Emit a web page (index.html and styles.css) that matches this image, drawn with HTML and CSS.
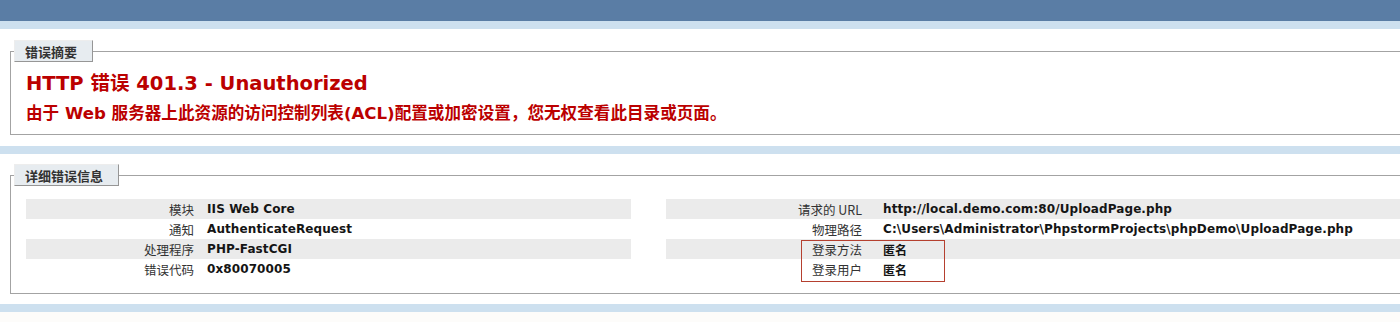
FILE: index.html
```html
<!DOCTYPE html>
<html lang="zh-CN">
<head>
    <meta charset="UTF-8">
    <title>IIS 7.5 详细错误 - 401.3 - Unauthorized</title>
    <link rel="stylesheet" href="styles.css">
</head>
<body>
    <div class="topbar"></div>

    <div class="container summary">
        <fieldset>
            <legend>错误摘要</legend>
            <h2>HTTP 错误 401.3 - Unauthorized</h2>
            <h3>由于 Web 服务器上此资源的访问控制列表(ACL)配置或加密设置，您无权查看此目录或页面。</h3>
        </fieldset>
    </div>

    <div class="container details">
        <fieldset>
            <legend>详细错误信息</legend>
            <div class="details-grid">
                <table class="details-left">
                    <tr class="alt"><th>模块</th><td>IIS Web Core</td></tr>
                    <tr><th>通知</th><td>AuthenticateRequest</td></tr>
                    <tr class="alt"><th>处理程序</th><td>PHP-FastCGI</td></tr>
                    <tr><th>错误代码</th><td>0x80070005</td></tr>
                </table>
                <div class="details-right">
                    <table>
                        <tr class="alt"><th>请求的 URL</th><td>http://local.demo.com:80/UploadPage.php</td></tr>
                        <tr><th>物理路径</th><td>C:\Users\Administrator\PhpstormProjects\phpDemo\UploadPage.php</td></tr>
                        <tr class="alt"><th>登录方法</th><td>匿名</td></tr>
                        <tr><th>登录用户</th><td>匿名</td></tr>
                    </table>
                    <span class="mark"></span>
                </div>
            </div>
        </fieldset>
    </div>

    <div class="container tail"></div>
</body>
</html>
```

FILE: styles.css
```css
* {
    box-sizing: border-box;
}

body {
    margin: 0;
    background: #cde0ef;
    font-family: "DejaVu Sans", Verdana, "Noto Sans CJK SC", sans-serif;
    color: #222;
    overflow: hidden;
}

.topbar {
    height: 21px;
    background: #5a7da5;
}

.container {
    background: #fff;
    margin-top: 8px;
    padding-left: 10px;
}

.summary {
    padding-top: 11px;
    padding-bottom: 11px;
}

.details {
    padding-top: 10px;
    padding-bottom: 10px;
}

.tail {
    height: 20px;
    background: #fdfcfa;
}

fieldset {
    margin: 0;
    padding: 0 0 0 15px;
    border: 1px solid #a3a3a3;
    border-right: none;
}

.summary fieldset {
    padding-bottom: 9px;
}

.details fieldset {
    padding-bottom: 14px;
}

legend {
    margin-left: -12px;
    padding: 4px 15px 3px 10px;
    line-height: 13px;
    font-size: 13px;
    font-weight: bold;
    color: #333;
    font-family: "Noto Sans CJK SC", sans-serif;
    background: #e7ecf0;
    border-top: 1px solid #ededed;
    border-left: 1px solid #ededed;
    border-right: 1px solid #969696;
    border-bottom: 1px solid #969696;
}

h2 {
    margin: 10px 0 0;
    font-size: 19.5px;
    line-height: 24px;
    color: #bb0000;
    font-family: "DejaVu Sans", "Noto Sans CJK SC", sans-serif;
}

h3 {
    margin: 7px 0 0;
    font-size: 16.6px;
    line-height: 22px;
    color: #bb0000;
    font-family: "DejaVu Sans", "Noto Sans CJK SC", sans-serif;
}

.details-grid {
    display: grid;
    grid-template-columns: 605px 1fr;
    gap: 35px;
    margin-top: 13px;
}

table {
    border-collapse: collapse;
    width: 100%;
}

.details-right {
    position: relative;
}

.details-right table {
    width: 760px;
}

tr {
    height: 20px;
}

tr.alt {
    background: #ebebeb;
}

th {
    font-weight: normal;
    text-align: right;
    font-size: 12.5px;
    color: #333;
    font-family: "Noto Sans CJK SC", sans-serif;
    padding: 0 13px 0 0;
    white-space: nowrap;
}

.details-left th {
    width: 181px;
}

.details-right th {
    width: 217px;
    padding-right: 21px;
}

td {
    font-size: 12px;
    font-weight: bold;
    color: #151515;
    padding: 0;
    white-space: nowrap;
    letter-spacing: 0.1px;
    font-family: "DejaVu Sans", "Noto Sans CJK SC", sans-serif;
}

.mark {
    position: absolute;
    left: 135px;
    top: 41px;
    width: 144px;
    height: 42px;
    border: 1px solid #b5402f;
}
```
